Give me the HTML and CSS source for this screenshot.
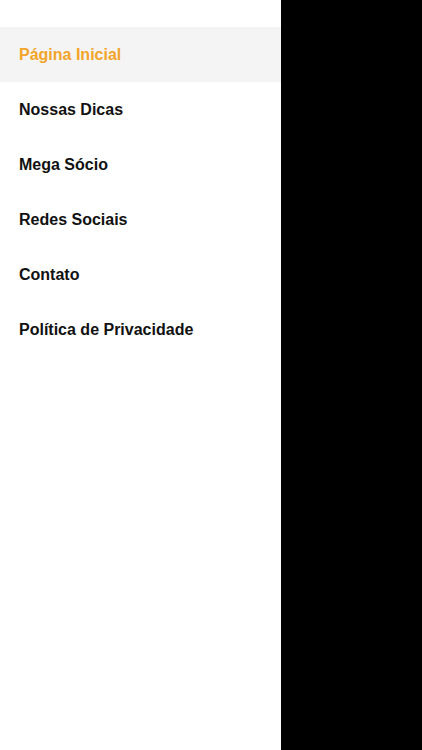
FILE: index.html
```html
<!DOCTYPE html>
<html lang="pt">
<head>
<meta charset="utf-8">
<link rel="stylesheet" href="styles.css">
</head>
<body>
<div class="screen">
  <nav class="drawer">
    <ul class="menu">
      <li class="item active">Página Inicial</li>
      <li class="item">Nossas Dicas</li>
      <li class="item">Mega Sócio</li>
      <li class="item">Redes Sociais</li>
      <li class="item">Contato</li>
      <li class="item">Política de Privacidade</li>
    </ul>
  </nav>
  <div class="overlay"></div>
</div>
</body>
</html>
```
FILE: styles.css
```css
html, body {
  margin: 0;
  padding: 0;
  height: 100%;
}
.screen {
  display: flex;
  height: 750px;
  width: 422px;
}
.drawer {
  width: 281px;
  background: #ffffff;
  padding-top: 27px;
  box-sizing: border-box;
}
.overlay {
  flex: 1;
  background: #000000;
}
.menu {
  list-style: none;
  margin: 0;
  padding: 0;
}
.item {
  height: 55px;
  display: flex;
  align-items: center;
  padding-left: 19px;
  font-family: "Liberation Sans", Arial, sans-serif;
  font-weight: bold;
  font-size: 16px;
  color: #111111;
}
.item.active {
  background: #f4f4f4;
  color: #f2a52a;
}
```
